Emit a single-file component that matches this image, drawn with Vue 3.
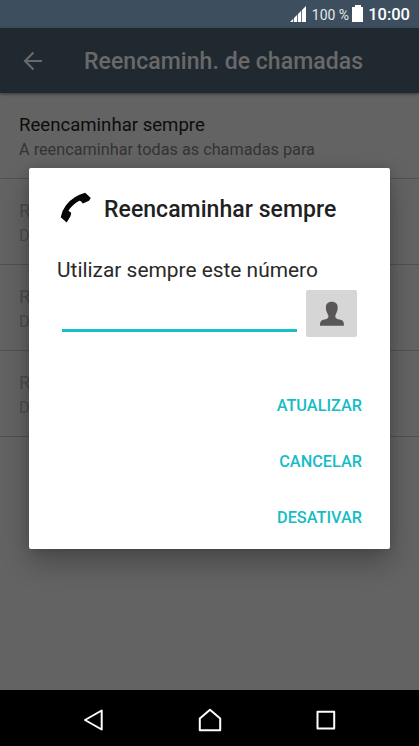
<template>
  <div class="screen">
    <header class="status-bar">
      <svg class="signal" width="18" height="18" viewBox="0 0 18 18">
        <path d="M1 17L17 1V17Z" fill="#fff" />
        <path d="M4.5 0V18M8.5 0V18M12.5 0V18" stroke="#3d4f5e" stroke-width="0.8" />
      </svg>
      <span class="percent">100 %</span>
      <svg class="battery" width="12" height="18" viewBox="0 0 12 18">
        <path d="M3 0H9V2H11V17H0V2H3Z" fill="#fff" />
      </svg>
      <span class="clock">10:00</span>
    </header>

    <div class="app-bar">
      <svg class="back" width="20" height="20" viewBox="0 0 20 20">
        <path d="M19 10H2M10.5 1.5L2 10L10.5 18.5" fill="none" stroke="#69696a" stroke-width="2.1" />
      </svg>
      <h1>Reencaminh. de chamadas</h1>
    </div>

    <main class="content">
      <ul class="options">
        <li v-for="(option, i) in options" :key="i" :class="{ disabled: option.disabled }">
          <span class="name">{{ option.name }}</span>
          <span class="detail">{{ option.detail }}</span>
        </li>
      </ul>
    </main>

    <section class="dialog" role="dialog">
      <div class="dialog-title">
        <svg class="phone" width="32" height="32" viewBox="0 0 32 32">
          <path d="M25.2 0.8L30.8 6.1L29 8.8L22.8 11.4L21 9.2L19.3 8.8Q12.5 12.5 8.4 18.8L11.2 20.8L10.6 24L6.7 30.4L0.7 25.2Q2.3 18 6 13.3Q13 4 25.2 0.8Z" fill="#070405" />
        </svg>
        <h2>Reencaminhar sempre</h2>
      </div>
      <label for="number">Utilizar sempre este número</label>
      <div class="field">
        <input id="number" v-model="number" type="tel" />
        <button type="button" class="contact" aria-label="Contactos">
          <svg width="26" height="26" viewBox="0 0 26 26">
            <path d="M12.8 0.7C16.8 0.7 19 3 18.7 7.3C18.5 11 16.8 12.5 16.3 14.8C16.1 17.7 18.2 18 21.5 18.7C24.5 19.4 25 21.5 25 24.8H1C1 21.5 1.5 19.4 4.5 18.7C7.8 18 9.6 17.7 9.4 14.8C8.8 12.5 7.1 11 6.9 7.3C6.6 3 8.8 0.7 12.8 0.7Z" fill="#5a5758" />
          </svg>
        </button>
      </div>
      <div class="actions">
        <button v-for="action in actions" :key="action" type="button">{{ action }}</button>
      </div>
    </section>

    <nav class="nav-bar">
      <svg width="24" height="24" viewBox="0 0 24 24">
        <path d="M20.7 2.5V21.5L4 12Z" />
      </svg>
      <svg width="24" height="24" viewBox="0 0 24 24">
        <path d="M1.8 10.5L12 1.8L22.2 10.5V22.2H1.8Z" />
      </svg>
      <svg width="24" height="24" viewBox="0 0 24 24">
        <path d="M3.5 3.8H20.2V20.5H3.5Z" />
      </svg>
    </nav>
  </div>
</template>

<script setup>
import { ref } from 'vue'

const number = ref('')

const options = [
  { name: 'Reencaminhar sempre', detail: 'A reencaminhar todas as chamadas para', disabled: false },
  { name: 'R', detail: 'D', disabled: true },
  { name: 'R', detail: 'D', disabled: true },
  { name: 'R', detail: 'D', disabled: true },
]

const actions = ['ATUALIZAR', 'CANCELAR', 'DESATIVAR']
</script>

<style>
body {
  margin: 0;
}
</style>

<style scoped>
* {
  box-sizing: border-box;
}
.screen {
  position: relative;
  display: flex;
  flex-direction: column;
  width: 419px;
  height: 746px;
  overflow: hidden;
  background: #636363;
  font-family: Roboto, sans-serif;
}
.status-bar {
  display: flex;
  align-items: center;
  justify-content: flex-end;
  height: 28px;
  padding-right: 9px;
  background: #3d4f5e;
  color: #fff;
}
.percent {
  margin: 2px 3px 0 5px;
  font-size: 14px;
  color: #e4e8eb;
}
.clock {
  margin: 1px 0 0 4px;
  font-size: 16.5px;
  font-weight: 500;
}
.app-bar {
  z-index: 1;
  display: flex;
  align-items: center;
  height: 65px;
  padding-left: 23px;
  background: #212930;
  box-shadow: 0 1px 3px rgba(0, 0, 0, 0.45);
}
.app-bar h1 {
  margin: 2px 0 0 41px;
  font-size: 23px;
  font-weight: 500;
  letter-spacing: 0.06px;
  line-height: 28px;
  white-space: nowrap;
  color: #69696a;
}
.content {
  flex: 1;
}
.options {
  margin: 0;
  padding: 0;
  list-style: none;
}
.options li {
  display: flex;
  flex-direction: column;
  height: 86px;
  padding: 20px 19px 0;
  border-bottom: 1px solid #515151;
  white-space: nowrap;
}
.name {
  font-size: 18.6px;
  line-height: 24px;
  color: #0d0d0d;
}
.detail {
  margin-top: 1px;
  font-size: 16.25px;
  line-height: 23px;
  color: #333;
}
.disabled .name,
.disabled .detail {
  color: #4b4b4b;
}
.dialog {
  position: absolute;
  z-index: 2;
  top: 168px;
  left: 29px;
  width: 361px;
  height: 381px;
  padding: 24px 28px 0;
  border-radius: 2px;
  background: #fff;
  box-shadow: 0 13px 28px rgba(0, 0, 0, 0.28), 0 0 8px rgba(0, 0, 0, 0.12);
}
.dialog-title {
  display: flex;
  align-items: center;
  height: 32px;
  padding-left: 3px;
}
.dialog-title h2 {
  margin: 2px 0 0 12px;
  font-size: 23px;
  font-weight: 500;
  letter-spacing: 0.05px;
  white-space: nowrap;
  color: #212121;
}
label {
  display: block;
  margin-top: 32px;
  font-size: 20.9px;
  line-height: 28px;
  color: #292929;
  white-space: nowrap;
}
.field {
  display: flex;
  align-items: flex-start;
  margin-top: 6px;
  padding-left: 5px;
}
input {
  width: 235px;
  height: 42px;
  padding: 0;
  border: 0;
  border-bottom: 3px solid #16c0c8;
  outline: none;
  background: transparent;
  font: 20px Roboto, sans-serif;
}
.contact {
  display: flex;
  align-items: center;
  justify-content: center;
  width: 51px;
  height: 47px;
  margin-left: 9px;
  padding: 0 0 0 1px;
  border: 0;
  border-radius: 2px;
  background: #d6d6d6;
}
.actions {
  display: flex;
  flex-direction: column;
  align-items: flex-end;
  gap: 8px;
  margin-top: 44px;
}
.actions button {
  height: 48px;
  padding: 0;
  border: 0;
  background: none;
  color: #16bcc4;
  font: 500 16.3px Roboto, sans-serif;
}
.nav-bar {
  display: flex;
  align-items: center;
  justify-content: space-between;
  height: 56px;
  padding: 4px 81px 0;
  background: #000;
}
.nav-bar path {
  fill: none;
  stroke: #fff;
  stroke-width: 2;
  stroke-linejoin: round;
}
</style>
